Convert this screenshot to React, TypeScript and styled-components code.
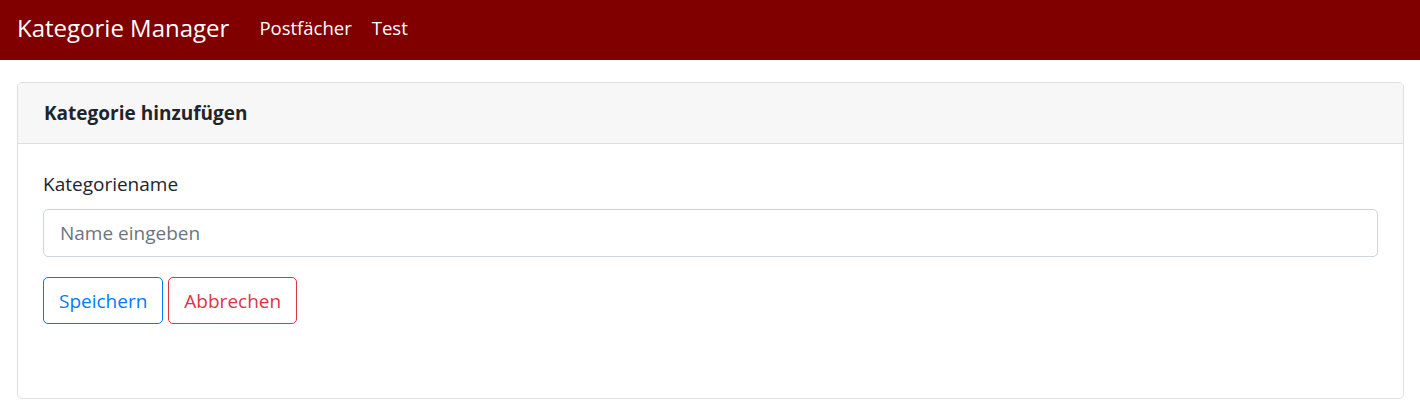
import React from "react";
import styled, { createGlobalStyle } from "styled-components";

const GlobalStyle = createGlobalStyle`
  html, body {
    margin: 0;
    padding: 0;
    background: #ffffff;
  }
  body {
    font-family: "Open Sans", "Noto Sans", "Liberation Sans", sans-serif;
    font-size: 19px;
    line-height: 30px;
    color: #212529;
  }
  * { box-sizing: border-box; }
`;

const Navbar = styled.nav`
  height: 60px;
  background: #800000;
  display: flex;
  align-items: center;
  padding: 0 17px 5px 17px;
`;

const Brand = styled.a`
  color: #ffffff;
  font-size: 24px;
  line-height: 30px;
  margin-right: 20px;
  text-decoration: none;
`;

const NavList = styled.div`
  display: flex;
  align-items: center;
`;

const NavLink = styled.a`
  color: #ffffff;
  font-size: 18.5px;
  line-height: 30px;
  padding: 0 10px;
  text-decoration: none;
`;

const Main = styled.main`
  padding: 22px 16px 0 17px;
`;

const Card = styled.section`
  border: 1px solid #dfdfdf;
  border-radius: 5px;
  background: #ffffff;
  overflow: hidden;
`;

const CardHeader = styled.header`
  background: #f7f7f7;
  border-bottom: 1px solid #dfdfdf;
  padding: 15px 25px 15px 26px;
  font-size: 19px;
  font-weight: 700;
  line-height: 30px;
  color: #212529;
`;

const CardBody = styled.div`
  padding: 25px 25px 74px 25px;
`;

const Label = styled.label`
  display: block;
  font-size: 19px;
  line-height: 30px;
  margin-bottom: 10px;
`;

const Input = styled.input`
  display: block;
  width: 100%;
  height: 48px;
  padding: 7px 16px;
  font-family: inherit;
  font-size: 19px;
  color: #495057;
  border: 1px solid #ced4da;
  border-radius: 5px;
  outline: none;
  &::placeholder {
    color: #6c757d;
  }
`;

const ButtonRow = styled.div`
  display: flex;
  gap: 5px;
  margin-top: 20px;
`;

const OutlineButton = styled.button<{ $color: string }>`
  height: 47px;
  padding: 0 15px;
  font-family: inherit;
  font-size: 19px;
  line-height: 30px;
  background: transparent;
  color: ${(p) => p.$color};
  border: 1px solid ${(p) => p.$color};
  border-radius: 5px;
  cursor: pointer;
`;

export default function App() {
  return (
    <>
      <GlobalStyle />
      <Navbar>
        <Brand href="#">Kategorie Manager</Brand>
        <NavList>
          <NavLink href="#">Postfächer</NavLink>
          <NavLink href="#">Test</NavLink>
        </NavList>
      </Navbar>
      <Main>
        <Card>
          <CardHeader>Kategorie hinzufügen</CardHeader>
          <CardBody>
            <Label htmlFor="name">Kategoriename</Label>
            <Input id="name" placeholder="Name eingeben" />
            <ButtonRow>
              <OutlineButton $color="#007bff">Speichern</OutlineButton>
              <OutlineButton $color="#dc3545">Abbrechen</OutlineButton>
            </ButtonRow>
          </CardBody>
        </Card>
      </Main>
    </>
  );
}
